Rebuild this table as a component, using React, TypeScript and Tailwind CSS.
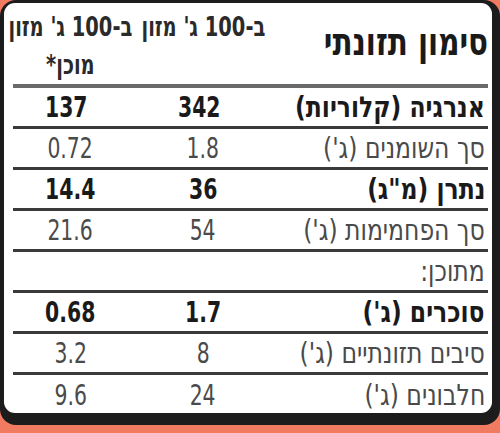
import React from 'react';

interface Row {
  label: string;
  per100: string;
  prepared: string;
  bold?: boolean;
}

const rows: Row[] = [
  { label: 'אנרגיה (קלוריות)', per100: '342', prepared: '137', bold: true },
  { label: "סך השומנים (ג')", per100: '1.8', prepared: '0.72' },
  { label: 'נתרן (מ"ג)', per100: '36', prepared: '14.4', bold: true },
  { label: "סך הפחמימות (ג')", per100: '54', prepared: '21.6' },
  { label: 'מתוכן:', per100: '', prepared: '' },
  { label: "סוכרים (ג')", per100: '1.7', prepared: '0.68', bold: true },
  { label: "סיבים תזונתיים (ג')", per100: '8', prepared: '3.2' },
  { label: "חלבונים (ג')", per100: '24', prepared: '9.6' },
];

const font = {
  fontFamily: '"DejaVu Sans Condensed", "Liberation Sans Narrow", "DejaVu Sans", sans-serif',
};

function App() {
  return (
    <div className="w-[500px] h-[433px] bg-[#f07b60] overflow-hidden" style={font}>
      <div className="h-[425px] bg-[#1c1c1c] rounded-[16px] pt-[3px] pl-[4px] pr-[8px] pb-[12px] [font-stretch:condensed]">
        <div dir="rtl" className="h-full bg-white rounded-[11px] pr-[4px] pl-[9px]">
          {/* header */}
          <div className="grid grid-cols-[1fr_150px_115px] grid-rows-[81px] h-[81px]">
            <div className="flex items-center pb-[4px]">
              <span className="inline-block origin-right scale-x-[0.86] text-[38px] font-bold text-[#1a1a1a] leading-none whitespace-nowrap">
                סימון תזונתי
              </span>
            </div>
            <div className="flex justify-center pt-[10px]">
              <span className="inline-block scale-x-[0.8] text-[27px] font-bold text-[#2a2a2a] leading-[28px] whitespace-nowrap">
                ב-100 ג' מזון
              </span>
            </div>
            <div className="flex justify-center pt-[5px]">
              <span className="inline-block scale-x-[0.8] text-[27px] font-bold text-[#2a2a2a] leading-[38px] whitespace-nowrap text-center">
                ב-100 ג' מזון
                <br />
                מוכן*
              </span>
            </div>
          </div>
          <div className="h-[4px] bg-[#6a6a6a]" />

          {rows.map((r, i) => (
            <div
              key={i}
              className={`grid grid-cols-[1fr_150px_115px] items-center h-[41px] text-[29px] leading-none ${
                i < rows.length - 1 ? 'border-b-[3px] border-[#3a3a3a]' : ''
              } ${r.bold ? 'font-bold text-[#1a1a1a]' : 'font-normal text-[#4a4a4a]'}`}
            >
              <div className="pr-[3px]">
                <span className="inline-block origin-right scale-x-[0.9] whitespace-nowrap">{r.label}</span>
              </div>
              <div className="text-center">
                <span className="inline-block scale-x-[0.78]">{r.per100}</span>
              </div>
              <div className="text-center">
                <span className="inline-block scale-x-[0.78]">{r.prepared}</span>
              </div>
            </div>
          ))}
        </div>
      </div>
    </div>
  );
}

export default App;
